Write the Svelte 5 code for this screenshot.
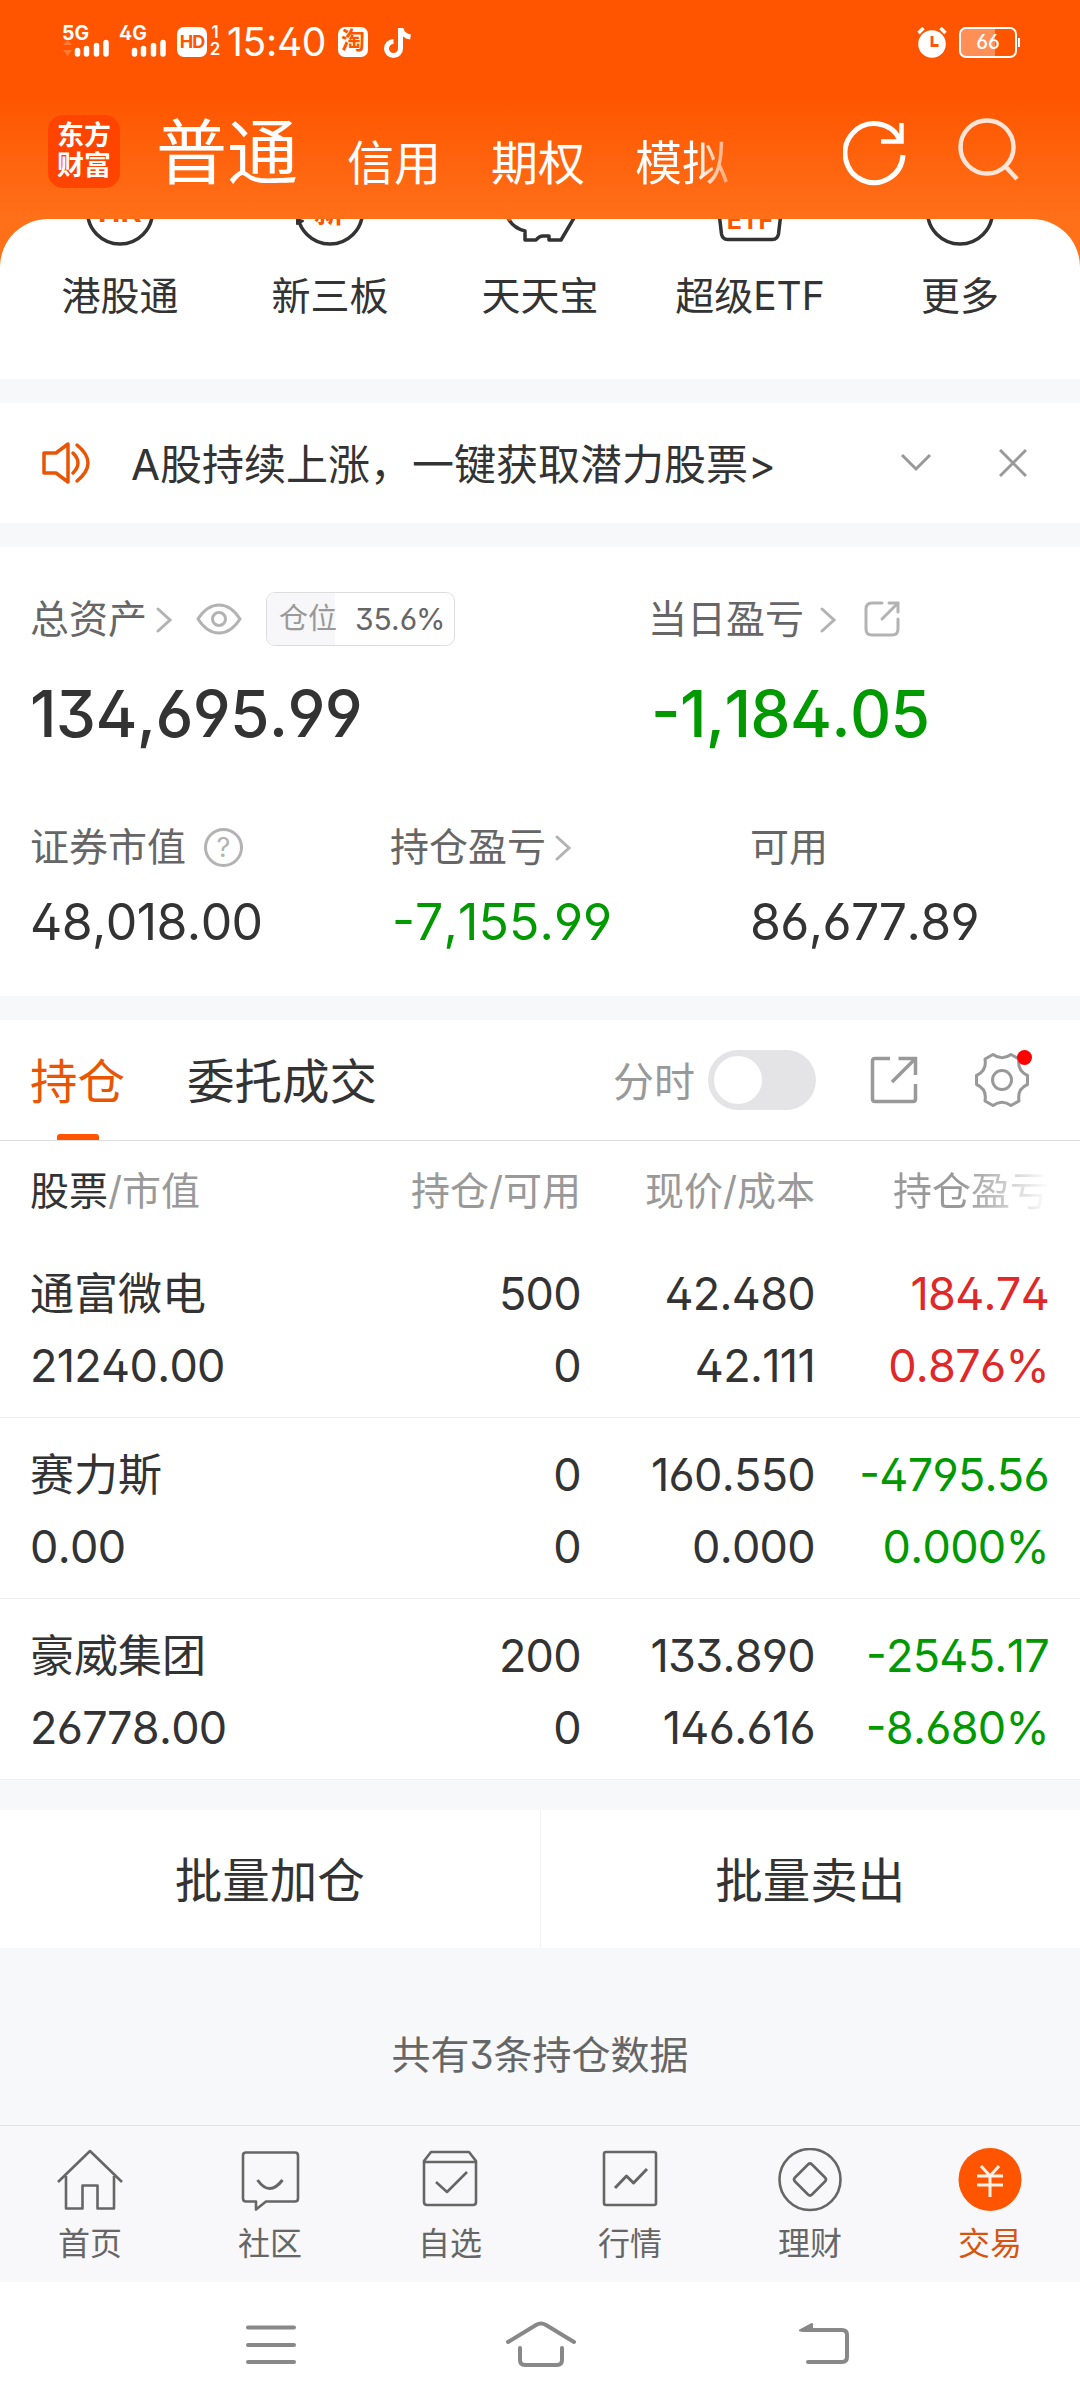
<script>
  const shortcuts = [
    { label: '港股通', icon: 'hk' },
    { label: '新三板', icon: 'neeq' },
    { label: '天天宝', icon: 'piggy' },
    { label: '超级ETF', icon: 'etf' },
    { label: '更多', icon: 'more' }
  ];

  const holdings = [
    { name: '通富微电', value: '21240.00', qty: '500', free: '0', price: '42.480', cost: '42.111', pnl: '184.74', rate: '0.876%', up: true },
    { name: '赛力斯', value: '0.00', qty: '0', free: '0', price: '160.550', cost: '0.000', pnl: '-4795.56', rate: '0.000%', up: false },
    { name: '豪威集团', value: '26778.00', qty: '200', free: '0', price: '133.890', cost: '146.616', pnl: '-2545.17', rate: '-8.680%', up: false }
  ];

  const tabs = ['首页', '社区', '自选', '行情', '理财', '交易'];

  let activeTab = $state('交易');
  let intraday = $state(false);
</script>

{#snippet chevron()}
  <svg class="chevron" width="16" height="26" viewBox="0 0 16 26">
    <path d="M2 2l12 11L2 24" fill="none" stroke="#b3b3b3" stroke-width="3" stroke-linecap="round" />
  </svg>
{/snippet}

{#snippet signal(label, arrows)}
  <div class="signal">
    <span>{label}</span>
    <svg width="50" height="18" viewBox="0 0 50 18">
      {#if arrows}
        <path d="M1 6l4.500-5 4.500 5zM1 11l4.500 6 4.500-6z" fill="#ff7a35" />
      {/if}
      <path d="M15.500 15v-3.500M24.500 15v-5.500M34.500 15V6.500M44 15V3.500" stroke="#fff" stroke-width="5.500" stroke-linecap="round" />
    </svg>
  </div>
{/snippet}

<div class="screen">
  <header>
    <div class="status">
      {@render signal('5G', true)}
      {@render signal('4G', false)}
      <span class="badge hd">HD</span>
      <div class="sims"><span>1</span><span>2</span></div>
      <span class="clock">15:40</span>
      <span class="badge tao">淘</span>
      <svg class="note" width="28" height="31" viewBox="0 0 28 31">
        <path d="M16.500 1v20.500a7 7 0 1 1-7-7" fill="none" stroke="#fff" stroke-width="5" />
        <path d="M17 2q2 7 9.500 8" fill="none" stroke="#fff" stroke-width="5" />
      </svg>
      <svg class="alarm" width="30" height="31" viewBox="0 0 30 31">
        <circle cx="15" cy="17" r="13.800" fill="#fff" />
        <path d="M1.500 6l5-5M28.500 6l-5-5" stroke="#fff" stroke-width="3.500" />
        <path d="M15 9v9.500h6.500" fill="none" stroke="#ff5500" stroke-width="2.800" />
      </svg>
      <div class="battery"><span>66</span></div>
    </div>

    <nav class="accounts">
      <div class="logo">东方<br />财富</div>
      <b class="current">普通</b>
      <span>信用</span>
      <span>期权</span>
      <span class="faded">模拟</span>
      <svg class="refresh" width="66" height="68" viewBox="0 0 66 68">
        <path d="M60 37A29 29.500 0 1 1 56.500 21" fill="none" stroke="#fff" stroke-width="5" />
        <path d="M58.500 5v18.500H38" fill="none" stroke="#fff" stroke-width="4.500" />
      </svg>
      <svg class="search" width="66" height="68" viewBox="0 0 66 68">
        <circle cx="31" cy="30" r="26.500" fill="none" stroke="#ffe5d8" stroke-width="4.500" />
        <path d="M49 49l12 13" stroke="#ffe5d8" stroke-width="4.500" />
      </svg>
    </nav>
  </header>

  <section class="shortcuts">
    {#each shortcuts as item}
      <div class="shortcut">
        <svg width="80" height="28" viewBox="0 0 80 28" fill="none" stroke="#333" stroke-width="3.500" stroke-linejoin="round">
          {#if item.icon === 'piggy'}
            <path d="M8 -1Q13 9 25 12v9h11q3-4 7-4h6v4h12l13-22" />
            <path d="M5 -3l6 4" stroke="#ff5500" />
          {:else if item.icon === 'etf'}
            <path d="M9.500 -2l2 17q1 5.500 6 5.500h45q5 0 6-5.500l2-17" />
          {:else}
            <circle cx="40" cy="-7.500" r="32.500" />
            {#if item.icon === 'neeq'}
              <path d="M7 0v5l6-3z" fill="#333" stroke-width="2" />
            {/if}
          {/if}
          {#if item.icon === 'hk'}
            <text x="40" y="3" class="glyph">HK</text>
          {:else if item.icon === 'neeq'}
            <text x="39" y="3" class="glyph">新</text>
          {:else if item.icon === 'etf'}
            <text x="40" y="10" class="glyph etf">ETF</text>
          {/if}
        </svg>
        <span>{item.label}</span>
      </div>
    {/each}
  </section>

  <section class="notice">
    <svg class="horn" width="48" height="44" viewBox="0 0 48 44" fill="none" stroke="#ea5504" stroke-width="3.500" stroke-linecap="round">
      <path d="M2 12h12L26 3v38L14 32H2z" stroke-linejoin="round" />
      <path d="M31 12q10 10 0 20M35 4q22 18 0 36" />
    </svg>
    <p>A股持续上涨，一键获取潜力股票&gt;</p>
    <svg class="down" width="32" height="20" viewBox="0 0 32 20"><path d="M2 2l14 14L30 2" fill="none" stroke="#999" stroke-width="3" /></svg>
    <svg class="close" width="28" height="28" viewBox="0 0 28 28"><path d="M1 1l26 26M27 1L1 27" stroke="#999" stroke-width="3" /></svg>
  </section>

  <section class="assets">
    <div class="primary">
      <div class="total">
        <div class="label">
          <span>总资产</span>{@render chevron()}
          <svg class="eye" width="46" height="32" viewBox="0 0 46 32" fill="none" stroke="#b3b3b3" stroke-width="3">
            <path d="M2 16Q11 2 23 2t21 14Q35 30 23 30T2 16z" />
            <circle cx="23" cy="16" r="6.500" />
          </svg>
          <div class="position"><span>仓位</span><em>35.6%</em></div>
        </div>
        <strong>134,695.99</strong>
      </div>
      <div class="today">
        <div class="label">
          <span>当日盈亏</span>{@render chevron()}
          <svg class="share" width="36" height="36" viewBox="0 0 36 36" fill="none" stroke="#b3b3b3" stroke-width="3" stroke-linecap="round">
            <path d="M18 2H8Q2 2 2 8v20q0 6 6 6h20q6 0 6-6V18M25 2h9v9M33 3L18 18" />
          </svg>
        </div>
        <strong class="green">-1,184.05</strong>
      </div>
    </div>
    <div class="secondary">
      <div>
        <div class="label">
          <span>证券市值</span>
          <i class="help">?</i>
        </div>
        <span class="num">48,018.00</span>
      </div>
      <div>
        <div class="label"><span>持仓盈亏</span>{@render chevron()}</div>
        <span class="num green">-7,155.99</span>
      </div>
      <div>
        <div class="label"><span>可用</span></div>
        <span class="num">86,677.89</span>
      </div>
    </div>
  </section>

  <section class="positions">
    <div class="toolbar">
      <span class="tab on">持仓</span>
      <span class="tab">委托成交</span>
      <span class="mode">分时</span>
      <button class="toggle" class:checked={intraday} aria-label="分时" onclick={() => (intraday = !intraday)}><i></i></button>
      <svg class="export" width="48" height="48" viewBox="0 0 48 48" fill="none" stroke="#999" stroke-width="3.500">
        <path d="M20 2.500H5Q2.500 2.500 2.500 5v38q0 2.500 2.500 2.500h38q2.500 0 2.500-2.500V28M28.500 2.500h17V19M44 4L22 26" />
      </svg>
      <div class="gear">
        <svg width="56" height="56" viewBox="0 0 56 56" fill="none" stroke="#999" stroke-width="3" stroke-linejoin="round">
          <path d="M19 2.500Q28 9 37 2.500L45 7Q43 19 53.500 23.500V32.500Q43 37 45 49L37 53.500Q28 47 19 53.500L11 49Q13 37 2.500 32.500V23.500Q13 19 11 7z" />
          <circle cx="28" cy="28" r="9.500" />
        </svg>
        <i class="dot"></i>
      </div>
    </div>

    <div class="row head">
      <span><b>股票</b>/市值</span>
      <span>持仓/可用</span>
      <span>现价/成本</span>
      <span class="fade">持仓盈亏</span>
    </div>
    {#each holdings as h}
      <div class="row">
        <div class="cell"><span class="name">{h.name}</span><span>{h.value}</span></div>
        <div class="cell"><span>{h.qty}</span><span>{h.free}</span></div>
        <div class="cell"><span>{h.price}</span><span>{h.cost}</span></div>
        <div class="cell" class:red={h.up} class:green={!h.up}><span>{h.pnl}</span><span>{h.rate}</span></div>
      </div>
    {/each}
  </section>

  <section class="batch">
    <span>批量加仓</span>
    <i></i>
    <span>批量卖出</span>
  </section>

  <p class="summary">共有3条持仓数据</p>

  <nav class="tabbar">
    {#each tabs as tab}
      <button class:active={tab === activeTab} onclick={() => (activeTab = tab)}>
        <svg width="66" height="66" viewBox="0 0 66 66" fill="none" stroke="#666" stroke-width="2.600" stroke-linejoin="round">
          {#if tab === '首页'}
            <path d="M1 34L33 3l32 31M9 28v32.500h16.500V37.500h15v23H57V28" />
          {:else if tab === '社区'}
            <path d="M9 4.500h49q3 0 3 3v43q0 3-3 3H29l-10 8v-8H9q-3 0-3-3v-43q0-3 3-3z" />
            <path d="M20.500 32q12 17 25 0" stroke-width="3" />
          {:else if tab === '自选'}
            <path d="M7 13l7-9h38l7 9v41q0 3-3 3H10q-3 0-3-3zM7 14h52M19 34l11 10 20-20" />
          {:else if tab === '行情'}
            <rect x="7" y="4" width="52" height="53" rx="2" />
            <path d="M18 40l11.500-12 7 7L50 21" stroke-width="3" />
          {:else if tab === '理财'}
            <circle cx="33" cy="31.500" r="30.500" />
            <path d="M31 16.500q2-2 4 0l13 13q2 2 0 4l-13 13q-2 2-4 0l-13-13q-2-2 0-4z" />
          {:else}
            <circle cx="33" cy="31.500" r="31.500" fill="#ff5500" stroke="none" />
            <path d="M24 18l9 10 9-10M20 28h26M20 37h26M33 28v21" stroke="#fff0e8" stroke-width="3" stroke-linejoin="miter" />
          {/if}
        </svg>
        <span>{tab}</span>
      </button>
    {/each}
  </nav>

  <footer>
    <svg width="50" height="48" viewBox="0 0 50 48"><path d="M2 6.500h46M2 24h46M2 41h46" stroke="#888" stroke-width="4" stroke-linecap="round" /></svg>
    <svg width="70" height="48" viewBox="0 0 70 48" fill="none" stroke="#888" stroke-width="4" stroke-linecap="round">
      <path d="M2 21L30 4q5-3 10 0l28 17M14 27v12q0 5 5 5h32q5 0 5-5V27" />
    </svg>
    <svg width="52" height="48" viewBox="0 0 52 48" fill="none" stroke="#888" stroke-width="4" stroke-linecap="round">
      <path d="M5 9h39q5 0 5 5v22q0 5-5 5H10" /><path d="M2 9.500L14 3v7z" fill="#888" stroke-width="2" stroke-linejoin="round" />
    </svg>
  </footer>
</div>

<style>
  :global(body) {
    margin: 0;
    background: #fff;
  }

  .screen {
    width: 1080px;
    height: 2408px;
    overflow: hidden;
    background: #f7f8fa;
    color: #333;
    font-family: Inter, 'Noto Sans CJK SC', sans-serif;
    font-size: 39px;
    font-feature-settings: 'ss01';
    display: flex;
    flex-direction: column;
  }

  svg {
    display: block;
    flex: none;
  }

  p {
    margin: 0;
  }

  button {
    border: 0;
    padding: 0;
    background: none;
    font: inherit;
    color: inherit;
  }

  header {
    height: 270px;
    box-sizing: border-box;
    flex: none;
    background: linear-gradient(#ff5500 95px, #ff7019 219px);
    color: #fff;
  }

  .status {
    display: flex;
    height: 58px;
    padding: 0 63px 0 62px;
    align-items: flex-end;
    line-height: 1;
  }

  .signal {
    width: 57px;
    height: 34px;
    font-size: 19.5px;
    font-weight: 700;
  }

  .signal span {
    display: block;
    height: 15px;
    line-height: 18px;
  }

  .badge {
    width: 30px;
    height: 30px;
    margin-bottom: 1px;
    border-radius: 7px;
    background: #fff;
    color: #ff5500;
    text-align: center;
    line-height: 30px;
  }

  .hd {
    margin-left: 1px;
    font-size: 18px;
    font-weight: 700;
    letter-spacing: -1px;
  }

  .sims {
    width: 12px;
    margin-left: 2px;
    display: flex;
    flex-direction: column;
    align-items: center;
    font-size: 17px;
    font-weight: 600;
  }

  .clock {
    margin-left: 6px;
    width: 111px;
    font-size: 39px;
    line-height: 33px;
    letter-spacing: -0.3px;
    white-space: nowrap;
  }

  .tao {
    font-size: 24px;
    font-weight: 700;
    line-height: 28px;
  }

  .note {
    margin-left: 16px;
  }

  .alarm {
    margin-left: auto;
    margin-right: 12px;
  }

  .battery {
    position: relative;
    box-sizing: border-box;
    width: 58px;
    height: 31px;
    border: 2px solid #fff;
    border-radius: 7px;
    background: linear-gradient(90deg, #ff8f55 34px, transparent 34px);
    text-align: center;
    font-size: 20px;
    font-weight: 500;
    line-height: 27px;
  }

  .battery::after {
    content: '';
    position: absolute;
    right: -5px;
    top: 9px;
    width: 2px;
    height: 9px;
    background: #fff;
  }

  .accounts {
    display: flex;
    height: 161px;
    padding: 0 58px 0 48px;
    font-size: 47px;
    line-height: 60px;
    align-items: flex-start;
  }

  .accounts > span {
    margin: 75px 0 0 50px;
  }

  .logo {
    width: 72px;
    height: 73px;
    margin-top: 57px;
    padding-top: 6px;
    box-sizing: border-box;
    border-radius: 15px;
    background: #ff4400;
    font-size: 27px;
    font-weight: 700;
    line-height: 30px;
    text-align: center;
  }

  .accounts .current {
    margin: 52px -1px 0 36px;
    font-size: 71px;
    line-height: 84px;
    font-weight: 400;
  }

  .faded {
    background: linear-gradient(90deg, #fff 65%, #ffa470 100%);
    background-clip: text;
    color: transparent;
  }

  .refresh {
    margin: 60px 0 0 auto;
  }

  .search {
    margin: 59px 0 0 47px;
  }

  .shortcuts {
    height: 160px;
    margin-top: -51px;
    flex: none;
    padding: 0 15px;
    border-radius: 48px 48px 0 0;
    background: #fff;
    display: flex;
    z-index: 1;
  }

  .shortcut {
    flex: 1;
    display: flex;
    flex-direction: column;
    align-items: center;
    line-height: 56px;
  }

  .shortcut span {
    margin-top: 21px;
  }

  .glyph {
    fill: #ff5500;
    stroke: none;
    font-size: 30px;
    font-weight: 700;
    text-anchor: middle;
  }

  .etf {
    font-size: 25px;
  }

  .notice {
    height: 120px;
    flex: none;
    margin-top: 24px;
    padding: 0 53px 0 42px;
    background: #fff;
    display: flex;
    align-items: center;
    font-size: 42px;
  }

  .notice p {
    margin: 0 auto 4px 41px;
  }

  .down {
    margin-right: 67px;
  }

  .assets {
    height: 449px;
    flex: none;
    box-sizing: border-box;
    margin-top: 24px;
    padding: 43px 30px 0;
    background: #fff;
  }

  .primary {
    display: flex;
  }

  .total {
    width: 618px;
  }

  .label {
    display: flex;
    height: 58px;
    align-items: center;
    color: #666;
  }

  .label > span {
    margin-bottom: 7px;
  }

  .chevron {
    margin: 2px 0 0 9px;
  }

  .today .chevron {
    margin-left: 16px;
  }

  .eye {
    margin-left: 24px;
  }

  .share {
    margin-left: 28px;
  }

  .position {
    display: flex;
    width: 189px;
    height: 54px;
    margin-left: 24px;
    box-sizing: border-box;
    border: 1px solid #ddd;
    border-radius: 9px;
    font-size: 29px;
    line-height: 51px;
    overflow: hidden;
  }

  .position span {
    width: 68px;
    padding-left: 12px;
    box-sizing: border-box;
    background: #f7f7fa;
    color: #999;
    white-space: nowrap;
  }

  .position em {
    margin-left: 20px;
    font-size: 30px;
    line-height: 53px;
    font-style: normal;
    white-space: nowrap;
  }

  strong,
  .num,
  .cell {
    font-kerning: none;
    font-feature-settings: 'ss01', 'case';
  }

  strong {
    display: block;
    margin-top: 26px;
    font-size: 64px;
    font-weight: 500;
    line-height: 80px;
    letter-spacing: -0.7px;
  }

  .today strong {
    margin-left: 3px;
  }

  .green {
    color: #009900;
  }

  .red {
    color: #e02828;
  }

  .secondary {
    display: flex;
    margin-top: 64px;
  }

  .secondary > div {
    width: 360px;
    flex: none;
  }

  .help {
    width: 33px;
    height: 33px;
    margin-left: 18px;
    border: 3px solid #b3b3b3;
    border-radius: 50%;
    color: #b3b3b3;
    font-size: 27px;
    font-style: normal;
    line-height: 33px;
    text-align: center;
  }

  .num {
    display: block;
    margin-top: 14px;
    font-size: 50px;
    line-height: 64px;
    letter-spacing: -0.6px;
  }

  .num.green {
    margin-left: 2px;
    letter-spacing: 0.1px;
  }

  .positions {
    flex: none;
    margin-top: 24px;
    background: #fff;
  }

  .toolbar {
    display: flex;
    align-items: center;
    height: 120px;
    padding: 0 50px 0 30px;
    border-bottom: 1px solid #ddd;
  }

  .tab {
    position: relative;
    height: 120px;
    margin-right: 62px;
    font-size: 47.5px;
    line-height: 123px;
  }

  .tab.on {
    color: #ea5504;
  }

  .tab.on::after {
    content: '';
    position: absolute;
    left: 27px;
    bottom: 0;
    width: 42px;
    height: 6px;
    border-radius: 3px 3px 0 0;
    background: #ff5500;
  }

  .mode {
    margin: 0 0 3px auto;
    font-size: 41px;
    color: #999;
  }

  .toggle {
    width: 108px;
    height: 60px;
    margin: 0 54px 0 13px;
    padding: 6px;
    border-radius: 30px;
    background: #e4e4e6;
  }

  .toggle i {
    display: block;
    width: 48px;
    height: 48px;
    border-radius: 50%;
    background: #fff;
  }

  .toggle.checked i {
    margin-left: auto;
  }

  .gear {
    position: relative;
    margin-left: 56px;
  }

  .dot {
    position: absolute;
    top: -2px;
    right: -2px;
    width: 15px;
    height: 15px;
    border-radius: 50%;
    background: #f00;
  }

  .row {
    display: grid;
    grid-template-columns: 330px 221px 234px 234px;
    height: 180px;
    padding: 0 30px;
    align-items: center;
    border-bottom: 1px solid #eee;
    text-align: right;
  }

  .row > :first-child {
    text-align: left;
  }

  .head {
    height: 94px;
    padding-bottom: 2px;
    border: 0;
    color: #999;
  }

  .head b {
    font-weight: 400;
    color: #333;
  }

  .head .fade {
    background: linear-gradient(90deg, #999 63%, #fff 100%);
    background-clip: text;
    color: transparent;
  }

  .cell {
    padding-top: 5px;
    display: flex;
    flex-direction: column;
    font-size: 45px;
    line-height: 72px;
    letter-spacing: -0.7px;
  }

  .name {
    font-size: 44px;
    letter-spacing: 0;
  }

  .batch {
    display: flex;
    height: 138px;
    flex: none;
    margin-top: 30px;
    background: #fff;
    align-items: center;
    font-size: 47.5px;
    text-align: center;
  }

  .batch span {
    flex: 1;
    margin-bottom: 4px;
  }

  .batch i {
    width: 1px;
    height: 138px;
    background: #f2f2f4;
  }

  .summary {
    height: 177px;
    flex: none;
    line-height: 214px;
    color: #666;
    text-align: center;
  }

  .tabbar {
    display: flex;
    flex: none;
    height: 157px;
    box-sizing: border-box;
    border-top: 1px solid #dfe2e5;
    background: #f8f8fa;
  }

  .tabbar button {
    flex: 1;
    display: flex;
    flex-direction: column;
    align-items: center;
    padding-top: 22px;
    font-size: 32px;
    line-height: 46px;
    color: #666;
  }

  .tabbar button span {
    margin-top: 7px;
  }

  .tabbar button.active {
    color: #d9540f;
  }

  footer {
    display: flex;
    flex: 1;
    padding-left: 246px;
    align-items: center;
    background: #fff;
  }

  footer svg + svg {
    margin-left: 210px;
  }

  footer svg:last-child {
    margin-left: 222px;
  }
</style>
